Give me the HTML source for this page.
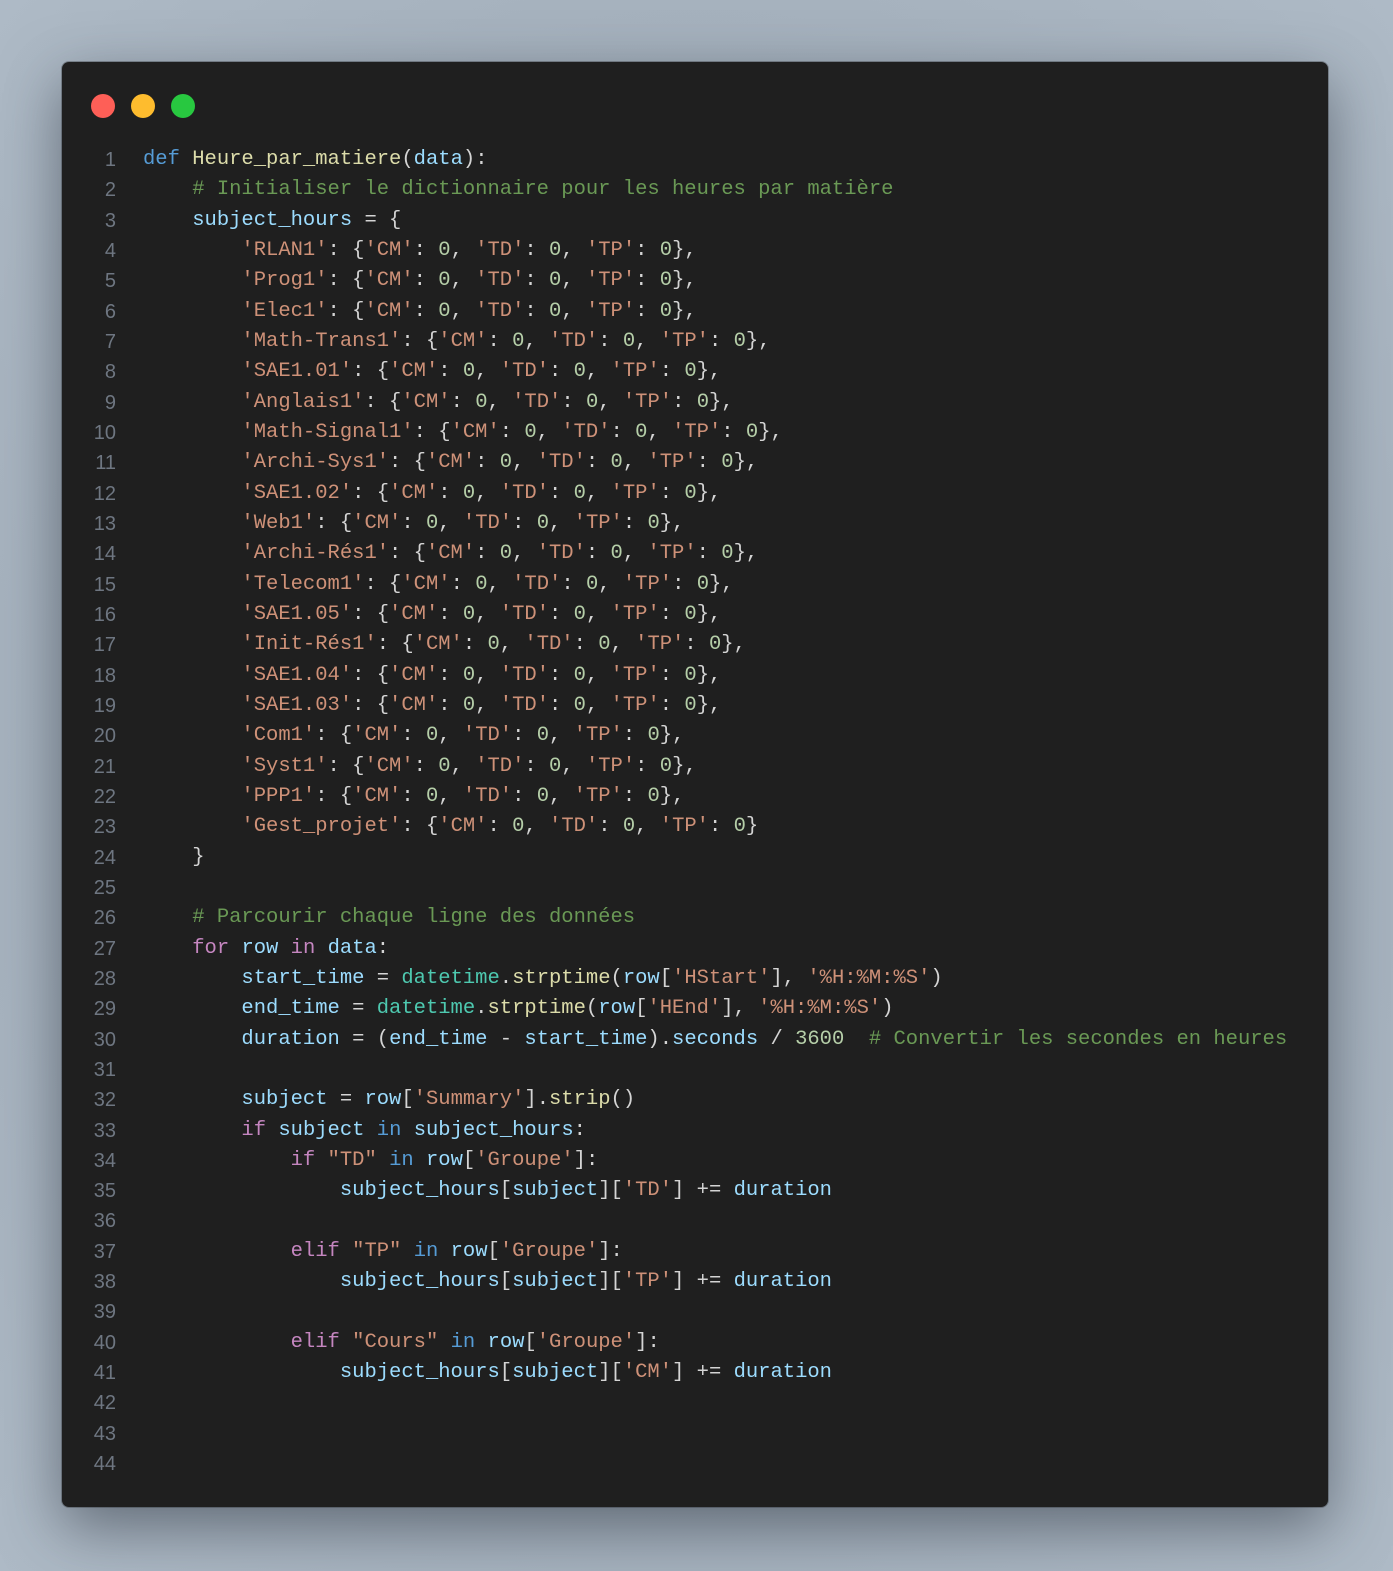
<!DOCTYPE html>
<html><head><meta charset="utf-8"><style>
html,body{margin:0;padding:0;}
body{width:1393px;height:1571px;background:radial-gradient(ellipse at 50% 50%,#8f9aa6 0%,#a3afbb 60%,#aebac6 100%);position:relative;overflow:hidden;font-family:"Liberation Mono",monospace;}
.win{position:absolute;left:62px;top:62px;width:1266px;height:1445px;background:#1f1f1f;border-radius:7px;box-shadow:0 20px 60px rgba(40,48,58,.55),0 0 0 1px rgba(0,0,0,.25);}
.dot{position:absolute;top:94px;width:24px;height:24px;border-radius:50%;}
.ln{position:absolute;left:62px;top:145px;width:54px;text-align:right;color:#6e7681;line-height:30.33px;white-space:pre;margin:0;font-family:"Liberation Sans",sans-serif;font-size:20px;}
.code{position:absolute;left:143px;top:145px;color:#d4d4d4;font-size:20.5px;line-height:30.33px;white-space:pre;margin:0;font-family:"Liberation Mono",monospace;}
.k{color:#569cd6}.c{color:#c586c0}.f{color:#dcdcaa}.v{color:#9cdcfe}.s{color:#ce9178}.n{color:#b5cea8}.m{color:#6a9955}.t{color:#4ec9b0}
</style></head><body>
<div class="win"></div>
<div class="dot" style="left:91px;background:#fe5f57"></div>
<div class="dot" style="left:131px;background:#febc2e"></div>
<div class="dot" style="left:171px;background:#28c840"></div>
<pre class="ln">1
2
3
4
5
6
7
8
9
10
11
12
13
14
15
16
17
18
19
20
21
22
23
24
25
26
27
28
29
30
31
32
33
34
35
36
37
38
39
40
41
42
43
44</pre>
<pre class="code"><span class="k">def</span> <span class="f">Heure_par_matiere</span>(<span class="v">data</span>):
    <span class="m"># Initialiser le dictionnaire pour les heures par matière</span>
    <span class="v">subject_hours</span> = {
        <span class="s">'RLAN1'</span>: {<span class="s">'CM'</span>: <span class="n">0</span>, <span class="s">'TD'</span>: <span class="n">0</span>, <span class="s">'TP'</span>: <span class="n">0</span>},
        <span class="s">'Prog1'</span>: {<span class="s">'CM'</span>: <span class="n">0</span>, <span class="s">'TD'</span>: <span class="n">0</span>, <span class="s">'TP'</span>: <span class="n">0</span>},
        <span class="s">'Elec1'</span>: {<span class="s">'CM'</span>: <span class="n">0</span>, <span class="s">'TD'</span>: <span class="n">0</span>, <span class="s">'TP'</span>: <span class="n">0</span>},
        <span class="s">'Math-Trans1'</span>: {<span class="s">'CM'</span>: <span class="n">0</span>, <span class="s">'TD'</span>: <span class="n">0</span>, <span class="s">'TP'</span>: <span class="n">0</span>},
        <span class="s">'SAE1.01'</span>: {<span class="s">'CM'</span>: <span class="n">0</span>, <span class="s">'TD'</span>: <span class="n">0</span>, <span class="s">'TP'</span>: <span class="n">0</span>},
        <span class="s">'Anglais1'</span>: {<span class="s">'CM'</span>: <span class="n">0</span>, <span class="s">'TD'</span>: <span class="n">0</span>, <span class="s">'TP'</span>: <span class="n">0</span>},
        <span class="s">'Math-Signal1'</span>: {<span class="s">'CM'</span>: <span class="n">0</span>, <span class="s">'TD'</span>: <span class="n">0</span>, <span class="s">'TP'</span>: <span class="n">0</span>},
        <span class="s">'Archi-Sys1'</span>: {<span class="s">'CM'</span>: <span class="n">0</span>, <span class="s">'TD'</span>: <span class="n">0</span>, <span class="s">'TP'</span>: <span class="n">0</span>},
        <span class="s">'SAE1.02'</span>: {<span class="s">'CM'</span>: <span class="n">0</span>, <span class="s">'TD'</span>: <span class="n">0</span>, <span class="s">'TP'</span>: <span class="n">0</span>},
        <span class="s">'Web1'</span>: {<span class="s">'CM'</span>: <span class="n">0</span>, <span class="s">'TD'</span>: <span class="n">0</span>, <span class="s">'TP'</span>: <span class="n">0</span>},
        <span class="s">'Archi-Rés1'</span>: {<span class="s">'CM'</span>: <span class="n">0</span>, <span class="s">'TD'</span>: <span class="n">0</span>, <span class="s">'TP'</span>: <span class="n">0</span>},
        <span class="s">'Telecom1'</span>: {<span class="s">'CM'</span>: <span class="n">0</span>, <span class="s">'TD'</span>: <span class="n">0</span>, <span class="s">'TP'</span>: <span class="n">0</span>},
        <span class="s">'SAE1.05'</span>: {<span class="s">'CM'</span>: <span class="n">0</span>, <span class="s">'TD'</span>: <span class="n">0</span>, <span class="s">'TP'</span>: <span class="n">0</span>},
        <span class="s">'Init-Rés1'</span>: {<span class="s">'CM'</span>: <span class="n">0</span>, <span class="s">'TD'</span>: <span class="n">0</span>, <span class="s">'TP'</span>: <span class="n">0</span>},
        <span class="s">'SAE1.04'</span>: {<span class="s">'CM'</span>: <span class="n">0</span>, <span class="s">'TD'</span>: <span class="n">0</span>, <span class="s">'TP'</span>: <span class="n">0</span>},
        <span class="s">'SAE1.03'</span>: {<span class="s">'CM'</span>: <span class="n">0</span>, <span class="s">'TD'</span>: <span class="n">0</span>, <span class="s">'TP'</span>: <span class="n">0</span>},
        <span class="s">'Com1'</span>: {<span class="s">'CM'</span>: <span class="n">0</span>, <span class="s">'TD'</span>: <span class="n">0</span>, <span class="s">'TP'</span>: <span class="n">0</span>},
        <span class="s">'Syst1'</span>: {<span class="s">'CM'</span>: <span class="n">0</span>, <span class="s">'TD'</span>: <span class="n">0</span>, <span class="s">'TP'</span>: <span class="n">0</span>},
        <span class="s">'PPP1'</span>: {<span class="s">'CM'</span>: <span class="n">0</span>, <span class="s">'TD'</span>: <span class="n">0</span>, <span class="s">'TP'</span>: <span class="n">0</span>},
        <span class="s">'Gest_projet'</span>: {<span class="s">'CM'</span>: <span class="n">0</span>, <span class="s">'TD'</span>: <span class="n">0</span>, <span class="s">'TP'</span>: <span class="n">0</span>}
    }

    <span class="m"># Parcourir chaque ligne des données</span>
    <span class="c">for</span> <span class="v">row</span> <span class="c">in</span> <span class="v">data</span>:
        <span class="v">start_time</span> = <span class="t">datetime</span>.<span class="f">strptime</span>(<span class="v">row</span>[<span class="s">'HStart'</span>], <span class="s">'%H:%M:%S'</span>)
        <span class="v">end_time</span> = <span class="t">datetime</span>.<span class="f">strptime</span>(<span class="v">row</span>[<span class="s">'HEnd'</span>], <span class="s">'%H:%M:%S'</span>)
        <span class="v">duration</span> = (<span class="v">end_time</span> - <span class="v">start_time</span>).<span class="v">seconds</span> / <span class="n">3600</span>  <span class="m"># Convertir les secondes en heures</span>

        <span class="v">subject</span> = <span class="v">row</span>[<span class="s">'Summary'</span>].<span class="f">strip</span>()
        <span class="c">if</span> <span class="v">subject</span> <span class="k">in</span> <span class="v">subject_hours</span>:
            <span class="c">if</span> <span class="s">"TD"</span> <span class="k">in</span> <span class="v">row</span>[<span class="s">'Groupe'</span>]:
                <span class="v">subject_hours</span>[<span class="v">subject</span>][<span class="s">'TD'</span>] += <span class="v">duration</span>

            <span class="c">elif</span> <span class="s">"TP"</span> <span class="k">in</span> <span class="v">row</span>[<span class="s">'Groupe'</span>]:
                <span class="v">subject_hours</span>[<span class="v">subject</span>][<span class="s">'TP'</span>] += <span class="v">duration</span>

            <span class="c">elif</span> <span class="s">"Cours"</span> <span class="k">in</span> <span class="v">row</span>[<span class="s">'Groupe'</span>]:
                <span class="v">subject_hours</span>[<span class="v">subject</span>][<span class="s">'CM'</span>] += <span class="v">duration</span>


</pre>
</body></html>
